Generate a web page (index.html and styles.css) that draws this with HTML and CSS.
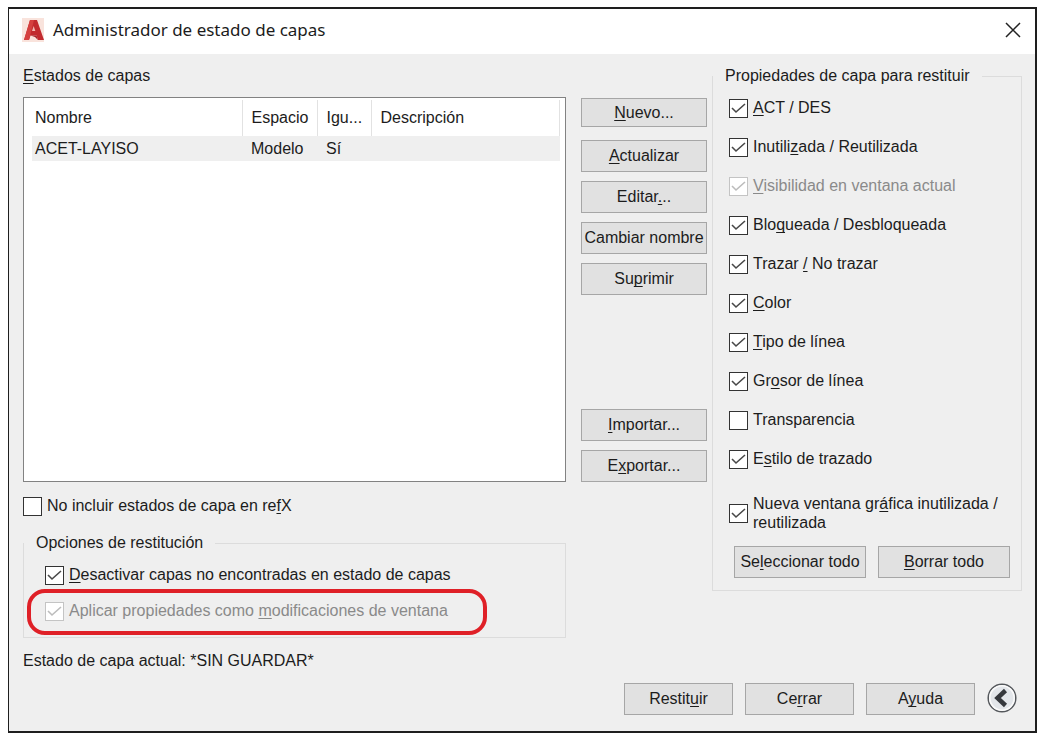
FILE: index.html
```html
<!DOCTYPE html>
<html lang="es">
<head>
<meta charset="utf-8">
<title>Administrador de estado de capas</title>
<link rel="stylesheet" href="styles.css">
</head>
<body>
<main class="dialog">
  <header class="titlebar">
    <svg class="logo" viewBox="0 0 22 24" aria-hidden="true">
      <rect width="22" height="24" fill="#f9e3dc"/>
      <path d="M2 22 8 2h7L22 22h-6l-1.500-4.500H8.500L7 22z" fill="#c22a2e"/>
      <path d="M2 22 8 2h4L7 22z" fill="#d5403f"/>
      <path d="M10 13 11.700 8l1.600 5z" fill="#f0b9b2"/>
      <path d="M8.500 17.500h6L16 22l-3-3z" fill="#a51f26"/>
    </svg>
    <h1 class="title">Administrador de estado de capas</h1>
    <button class="close" type="button" aria-label="Cerrar ventana">
      <svg viewBox="0 0 16 16" aria-hidden="true"><path d="M1 1l14 14M15 1L1 15" fill="none" stroke="#222" stroke-width="1.500"/></svg>
    </button>
  </header>

  <div class="content">
    <section class="states">
      <h2 class="caption"><u>E</u>stados de capas</h2>
      <div class="listbox">
        <table class="list">
          <thead>
            <tr><th class="col-name">Nombre</th><th class="col-space">Espacio</th><th class="col-same">Igu...</th><th>Descripción</th></tr>
          </thead>
          <tbody>
            <tr><td>ACET-LAYISO</td><td>Modelo</td><td>Sí</td><td></td></tr>
          </tbody>
        </table>
      </div>
      <label class="check"><input type="checkbox"><span>No incluir estados de capa en re<u>f</u>X</span></label>
      <fieldset class="group options">
        <legend>Opciones de restitución</legend>
        <label class="check"><input type="checkbox" checked><span><u>D</u>esactivar capas no encontradas en estado de capas</span></label>
        <label class="check highlighted"><input type="checkbox" checked disabled><span>Aplicar propiedades como <u>m</u>odificaciones de ventana</span></label>
      </fieldset>
      <p class="current">Estado de capa actual: *SIN GUARDAR*</p>
    </section>

    <div class="actions">
      <button class="btn btn-short" type="button"><u>N</u>uevo...</button>
      <button class="btn" type="button"><u>A</u>ctualizar</button>
      <button class="btn" type="button">Editar<u>.</u>..</button>
      <button class="btn" type="button">Cambiar nombre</button>
      <button class="btn" type="button">Su<u>p</u>rimir</button>
      <button class="btn btn-import" type="button"><u>I</u>mportar...</button>
      <button class="btn" type="button">E<u>x</u>portar...</button>
    </div>

    <fieldset class="group properties">
      <legend>Propiedades de capa para restituir</legend>
      <label class="check"><input type="checkbox" checked><span><u>A</u>CT / DES</span></label>
      <label class="check"><input type="checkbox" checked><span>Inutili<u>z</u>ada / Reutilizada</span></label>
      <label class="check"><input type="checkbox" checked disabled><span><u>V</u>isibilidad en ventana actual</span></label>
      <label class="check"><input type="checkbox" checked><span>Blo<u>q</u>ueada / Desbloqueada</span></label>
      <label class="check"><input type="checkbox" checked><span>Trazar <u>/</u> No trazar</span></label>
      <label class="check"><input type="checkbox" checked><span><u>C</u>olor</span></label>
      <label class="check"><input type="checkbox" checked><span><u>T</u>ipo de línea</span></label>
      <label class="check"><input type="checkbox" checked><span>Gr<u>o</u>sor de línea</span></label>
      <label class="check"><input type="checkbox"><span>Transparencia</span></label>
      <label class="check"><input type="checkbox" checked><span>E<u>s</u>tilo de trazado</span></label>
      <label class="check check-tall"><input type="checkbox" checked><span>Nueva ventana gr<u>á</u>fica inutilizada / <br>reutilizada</span></label>
      <div class="pair">
        <button class="btn" type="button">Se<u>l</u>eccionar todo</button>
        <button class="btn" type="button"><u>B</u>orrar todo</button>
      </div>
    </fieldset>
  </div>

  <footer class="footer">
    <button class="btn" type="button">Restit<u>u</u>ir</button>
    <button class="btn" type="button">Ce<u>r</u>rar</button>
    <button class="btn" type="button">A<u>y</u>uda</button>
    <button class="collapse" type="button" aria-label="Contraer">
      <svg viewBox="0 0 30 30" aria-hidden="true">
        <circle cx="15" cy="15" r="13.800" fill="#e3e6ea" stroke="#55585c" stroke-width="1.500"/>
        <circle cx="15" cy="15" r="12.200" fill="none" stroke="#fafafa" stroke-width="1.600"/>
        <path d="M18.500 7.500 10.500 15l8 7.500" fill="none" stroke="#35383d" stroke-width="4.500"/>
      </svg>
    </button>
  </footer>
</main>
</body>
</html>
```
FILE: styles.css
```css
* { box-sizing: border-box; }

body {
  margin: 0;
  padding: 7px 13px 10px 8px;
  background: #fff;
  color: #1c1c1c;
  font: 16px/20px "Liberation Sans", Arial, sans-serif;
}

h1, h2, p { margin: 0; font-size: inherit; font-weight: normal; }

u {
  text-decoration-thickness: 1px;
  text-underline-offset: 2px;
  text-decoration-skip-ink: none;
}

.dialog { border: 2px solid #1e1e1e; border-left-width: 1px; background: #efefef; }

.titlebar {
  display: flex;
  align-items: center;
  height: 45px;
  padding: 0 14px 4px 13px;
  background: #fff;
}
.logo { width: 22px; height: 24px; }
.title {
  flex: 1;
  margin-left: 9px;
  font: 17px/24px "Noto Sans", "Open Sans", sans-serif;
}
.close { width: 16px; height: 16px; padding: 0; border: 0; background: none; }
.close svg { display: block; }

.content { display: flex; padding: 12px 13px 0 14px; }

.states { flex: 1; min-width: 0; }
.listbox {
  height: 385px;
  margin: 11px 0 14px;
  padding: 2px 5px 0 8px;
  border: 1px solid #828282;
  background: #fff;
}
.list { width: 100%; table-layout: fixed; border-collapse: collapse; }
.list th, .list td { padding: 0 0 0 9px; text-align: left; font-weight: normal; }
.list th { height: 36px; border-right: 1px solid #e2e2e2; }
.list td { height: 25px; background: #efefef; }
.list th:first-child, .list td:first-child { padding-left: 3px; }
.col-name { width: 210px; }
.col-space { width: 75px; }
.col-same { width: 54px; }

.check { display: flex; align-items: center; gap: 5px; width: fit-content; }
.check input {
  flex: none;
  appearance: none;
  width: 19px;
  height: 19px;
  margin: 0;
  border: 1px solid #333;
  background: #fff;
}
.check input:checked {
  background: #fff url("data:image/svg+xml,%3Csvg xmlns='http://www.w3.org/2000/svg' viewBox='0 0 17 17'%3E%3Cpath d='M2 8l4 4 9-8' fill='none' stroke='%23484848' stroke-width='1.6'/%3E%3C/svg%3E") center / 17px 17px no-repeat;
}
.check input:disabled {
  border-color: #c4c4c4;
  background-image: url("data:image/svg+xml,%3Csvg xmlns='http://www.w3.org/2000/svg' viewBox='0 0 17 17'%3E%3Cpath d='M2 8l4 4 9-8' fill='none' stroke='%23bcbcbc' stroke-width='1.6'/%3E%3C/svg%3E");
}
.check input:disabled + span { color: #8a8a8a; }

.group { min-width: 0; margin: 0; border: 1px solid #dcdcdc; }
.group legend { padding: 0 12px; }

.options { margin-top: 17px; padding: 12px 21px 16px; }
.options legend { margin-left: -21px; }
.options .check + .check { margin-top: 16px; }

.highlighted { position: relative; }
.highlighted::after {
  content: "";
  position: absolute;
  inset: -12px -39px -14px -18px;
  border: 4px solid #df2027;
  border-radius: 18px;
}
.current { margin-top: 13px; }

.actions {
  display: flex;
  flex-direction: column;
  gap: 9px;
  width: 126px;
  margin: 32px 5px 0 15px;
}
.btn {
  height: 32px;
  padding: 0;
  border: 1px solid #a6a6a6;
  background: #e1e1e1;
  color: inherit;
  font: inherit;
  white-space: nowrap;
}
.btn-short { height: 29px; margin-bottom: 4px; }
.btn-import { margin-top: 105px; }

.properties { align-self: flex-start; width: 310px; padding: 12px 11px 12px 16px; }
.properties legend { margin-left: -16px; }
.properties .check + .check { margin-top: 19px; }
.properties .check + .check-tall { margin-top: 25px; }
.check-tall { line-height: 19px; }
.pair { display: grid; grid-template-columns: 1fr 1fr; gap: 12px; margin: 14px 0 0 5px; }

.footer {
  display: flex;
  justify-content: flex-end;
  align-items: flex-start;
  gap: 12px;
  padding: 12px 18px 16px;
}
.footer .btn { width: 109px; }
.collapse { width: 30px; height: 30px; padding: 0; border: 0; background: none; }
.collapse svg { display: block; }
```
